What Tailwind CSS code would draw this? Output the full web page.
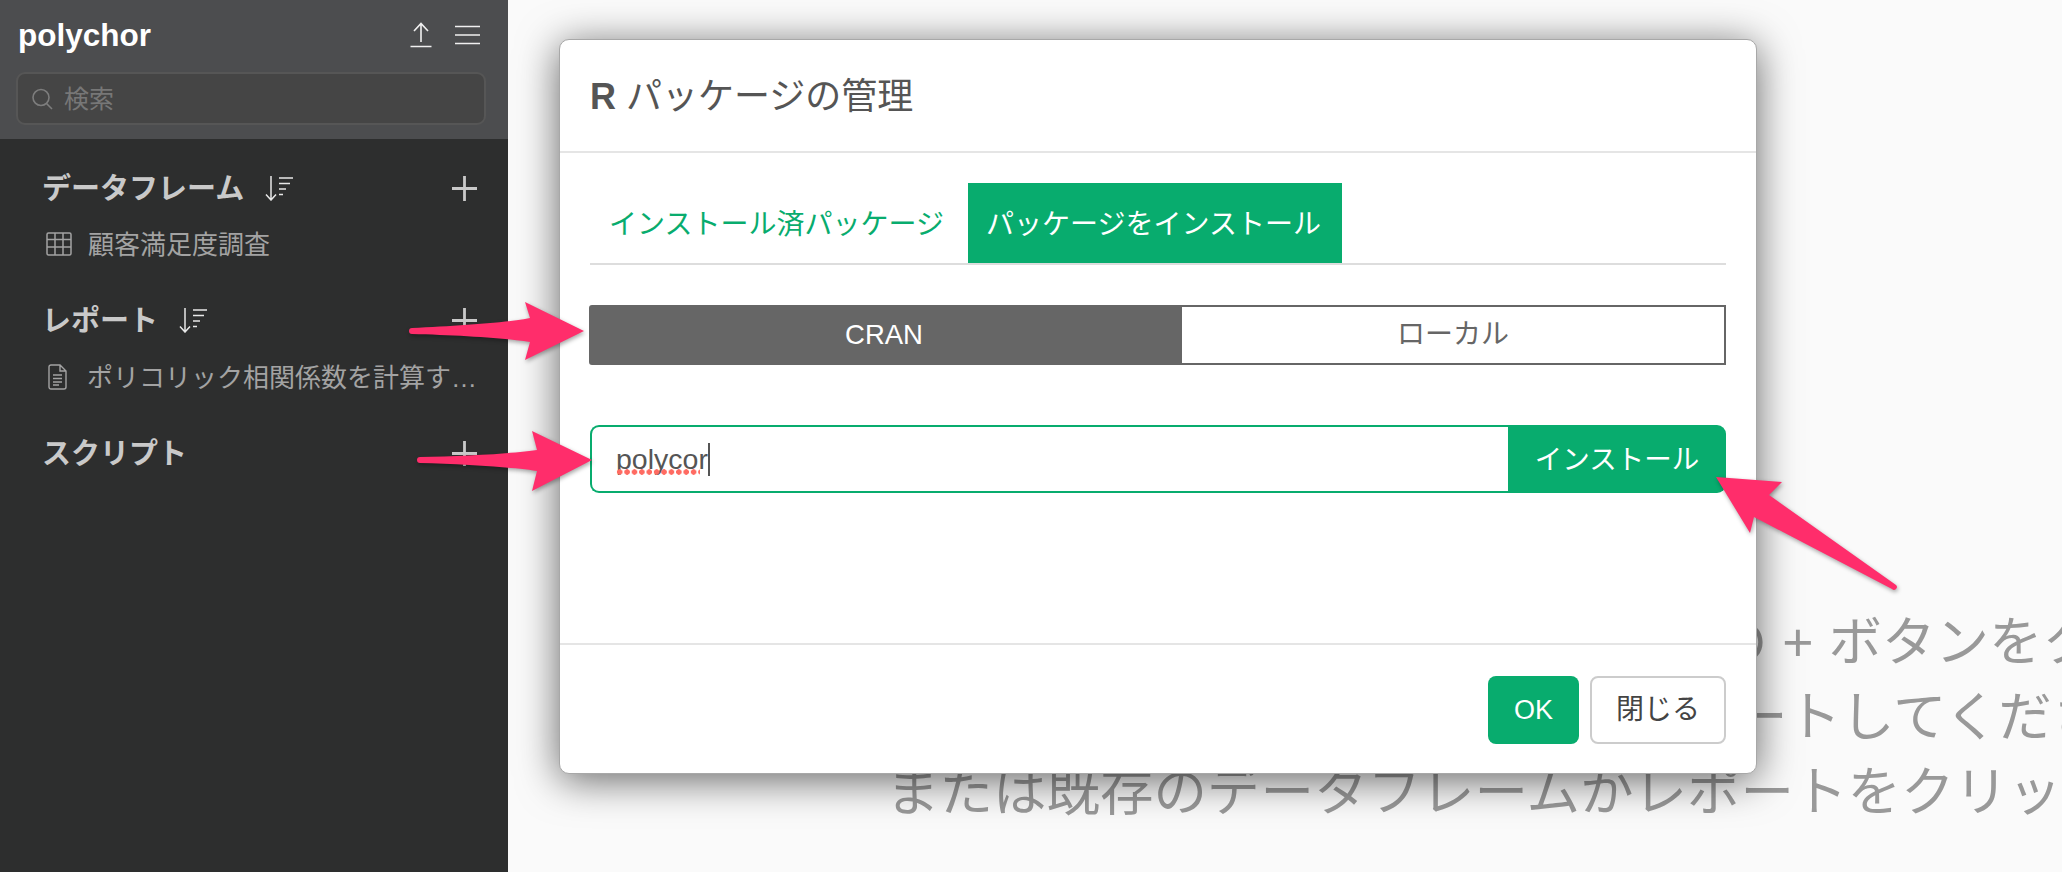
<!DOCTYPE html>
<html lang="ja">
<head>
    <meta charset="UTF-8">
    <title>R パッケージの管理</title>
    <script src="https://cdn.jsdelivr.net/npm/@tailwindcss/browser@4"></script>
</head>
<body class="bg-[#fafafa] overflow-hidden [font-family:'Liberation_Sans','Noto_Sans_CJK_JP',sans-serif]">
    <div class="relative flex w-[2062px] h-[872px] overflow-hidden">
        <!-- Sidebar -->
        <aside class="relative z-10 w-[508px] shrink-0 bg-[#2d2e2e] flex flex-col">
            <div class="h-[139px] bg-[#4c4d4f] px-4 pt-[13px]">
                <div class="flex items-center justify-between h-[44px] pl-[2px] pr-[12px]">
                    <span class="text-[31.500px] font-bold text-white pt-[2px]">polychor</span>
                    <div class="flex items-center gap-[23px]">
                        <svg class="w-[22px] h-[26px]" viewBox="0 0 22 26" fill="none" stroke="#f0f0f0" stroke-width="1.6">
                            <path d="M11 1V20M4 9L11 1.500L18 9M0.500 24.500H21.500"/>
                        </svg>
                        <svg class="w-[25px] h-[20px]" viewBox="0 0 25 20" fill="none" stroke="#f0f0f0" stroke-width="1.6">
                            <path d="M0 1.500H25M0 10H25M0 18.500H25"/>
                        </svg>
                    </div>
                </div>
                <div class="mt-[15px] h-[53px] w-[470px] rounded-[9px] border-2 border-[#565656] bg-[#454545] flex items-center pl-[13px] gap-[11px]">
                    <svg class="w-[22px] h-[22px] shrink-0" viewBox="0 0 22 22" fill="none" stroke="#7d7d7d" stroke-width="1.6">
                        <circle cx="10" cy="9.500" r="8"/>
                        <path d="M15.500 15.500L21 21"/>
                    </svg>
                    <span class="text-[25px] text-[#777777] pt-[3px]">検索</span>
                </div>
            </div>
            <div class="pl-[42px] pr-[31px] pt-[29px] text-[#c9c9c9]">
                <div class="flex items-center justify-between h-[40px]">
                    <div class="flex items-center gap-[21px]">
                        <span class="text-[29px] font-bold pt-[3px]">データフレーム</span>
                        <svg class="w-[28px] h-[25px]" viewBox="0 0 28 25" fill="none" stroke="#e8e8e8" stroke-width="1.500">
                            <path d="M6 0V23.500M1 18.500L6 24L11 18.500M14 2H28M14 7.500H25M14 13H21M14 18.500H18"/>
                        </svg>
                    </div>
                    <svg class="w-[25px] h-[25px]" viewBox="0 0 25 25" stroke="#c9c9c9" stroke-width="2.800"><path d="M12.500 0V25M0 12.500H25"/></svg>
                </div>
                <div class="flex items-center h-[40px] mt-[16px] pl-[4px] gap-[16px] text-[#a3a3a3]">
                    <svg class="w-[26px] h-[24px] shrink-0" viewBox="0 0 26 24" fill="none" stroke="#a3a3a3" stroke-width="1.500">
                        <rect x="1" y="1" width="24" height="22" rx="1.500"/>
                        <path d="M1 7.500H25M1 15H25M9 1V23M17 1V23"/>
                    </svg>
                    <span class="text-[26px] pt-[2px]">顧客満足度調査</span>
                </div>
                <div class="flex items-center justify-between h-[40px] mt-[36px]">
                    <div class="flex items-center gap-[21px]">
                        <span class="text-[29px] font-bold pt-[3px]">レポート</span>
                        <svg class="w-[28px] h-[25px]" viewBox="0 0 28 25" fill="none" stroke="#e8e8e8" stroke-width="1.500">
                            <path d="M6 0V23.500M1 18.500L6 24L11 18.500M14 2H28M14 7.500H25M14 13H21M14 18.500H18"/>
                        </svg>
                    </div>
                    <svg class="w-[25px] h-[25px]" viewBox="0 0 25 25" stroke="#c9c9c9" stroke-width="2.800"><path d="M12.500 0V25M0 12.500H25"/></svg>
                </div>
                <div class="flex items-center h-[40px] mt-[17px] pl-[6px] gap-[20px] text-[#a3a3a3]">
                    <svg class="w-[19px] h-[26px] shrink-0" viewBox="0 0 19 26" fill="none" stroke="#a3a3a3" stroke-width="1.400">
                        <path d="M1 3A2 2 0 0 1 3 1H12L18 7V23A2 2 0 0 1 16 25H3A2 2 0 0 1 1 23ZM12 1V7H18M5 11H14M5 14.500H14M5 18H14M5 21H11"/>
                    </svg>
                    <span class="truncate shrink-0 w-[392px] text-[26px] pt-[2px]">ポリコリック相関係数を計算するレポート</span>
                </div>
                <div class="flex items-center justify-between h-[40px] mt-[36px]">
                    <span class="text-[29px] font-bold pt-[3px]">スクリプト</span>
                    <svg class="w-[25px] h-[25px]" viewBox="0 0 25 25" stroke="#c9c9c9" stroke-width="2.800"><path d="M12.500 0V25M0 12.500H25"/></svg>
                </div>
            </div>
        </aside>

        <!-- Empty state text behind the dialog -->
        <main class="flex-1 pt-[605px] text-[53.500px] leading-[75px] text-[#999999] whitespace-nowrap">
            <p class="ml-[1206px]">の + ボタンをクリック</p>
            <p class="ml-[1226px]">ートしてください</p>
            <p class="ml-[378px]">または既存のデータフレームかレポートをクリックしてください</p>
        </main>

        <!-- Dialog -->
        <div class="absolute z-[5] left-[559px] top-[39px] w-[1198px] h-[735px] bg-white rounded-[10px] border border-[#a8a8a8] shadow-[0_6px_40px_rgba(0,0,0,0.6)] flex flex-col">
            <div class="h-[113px] flex items-center pl-[30px] pt-[2px] text-[#555555] text-[36px] border-b-2 border-[#e5e5e5]">
                <span><b class="font-bold">R</b> パッケージの管理</span>
            </div>
            <div class="flex-1 px-[30px] pt-[30px]">
                <div class="flex border-b-2 border-[#dddddd] h-[82px] text-[28px]">
                    <div class="w-[378px] h-[80px] pl-[19px] pt-[3px] flex items-center text-[#08ac6e]">インストール済パッケージ</div>
                    <div class="w-[374px] h-[80px] pr-[3px] pt-[3px] flex items-center justify-center bg-[#08ac6e] text-white">パッケージをインストール</div>
                </div>
                <div class="flex mt-[40px] -ml-[1px] h-[60px] border-2 border-[#666666] rounded-l-[3px] text-[27.500px]">
                    <div class="w-[591px] pr-[5px] bg-[#666666] text-white flex items-center justify-center">CRAN</div>
                    <div class="flex-1 text-[#666666] text-[28px] flex items-center justify-center">ローカル</div>
                </div>
                <div class="flex mt-[60px] h-[68px]">
                    <div class="flex-1 rounded-l-[9px] border-2 border-r-0 border-[#08ac6e] flex items-center pl-[24px] text-[28.500px] text-[#555555]">
                        <span class="relative">polycor<span class="absolute left-0 right-[8px] top-[31px] h-[6px] bg-[radial-gradient(circle,#ff6b62_2.500px,transparent_3px)] bg-[length:7.400px_6px]"></span></span>
                        <span class="w-[2px] h-[33px] bg-[#555555]"></span>
                    </div>
                    <div class="w-[218px] pt-[1px] rounded-r-[9px] bg-[#08ac6e] text-white text-[27.500px] flex items-center justify-center">インストール</div>
                </div>
            </div>
            <div class="h-[130px] border-t-2 border-[#e5e5e5] flex justify-end gap-[11px] pt-[31px] pr-[30px]">
                <div class="w-[91px] h-[68px] rounded-[8px] bg-[#08ac6e] text-white text-[27px] flex items-center justify-center">OK</div>
                <div class="w-[136px] h-[68px] rounded-[8px] border-2 border-[#cccccc] text-[#444444] text-[28px] flex items-center justify-center">閉じる</div>
            </div>
        </div>

        <!-- Annotation arrows -->
        <svg class="absolute z-20 left-0 top-0 w-[2062px] h-[872px] pointer-events-none drop-shadow-[1px_2px_2px_rgba(0,0,0,0.35)]" viewBox="0 0 2062 872" fill="#ff2d6b">
            <path d="M412 328 C455 326 505 323 530 318 L525 302 L584 331 L525 360 L530 342 C505 338 455 335 412 334 A3 3 0 0 1 412 328 Z"/>
            <path d="M420 457 C460 456 510 454 537 450 L532 431 L592 460 L532 491 L537 471 C510 467 460 464 420 463 A3 3 0 0 1 420 457 Z"/>
            <path d="M1716 477 L1782 482 L1769 495 L1896 585 A2.500 2.500 0 0 1 1892 589 L1754 517 L1750 533 Z"/>
        </svg>
    </div>
</body>
</html>
